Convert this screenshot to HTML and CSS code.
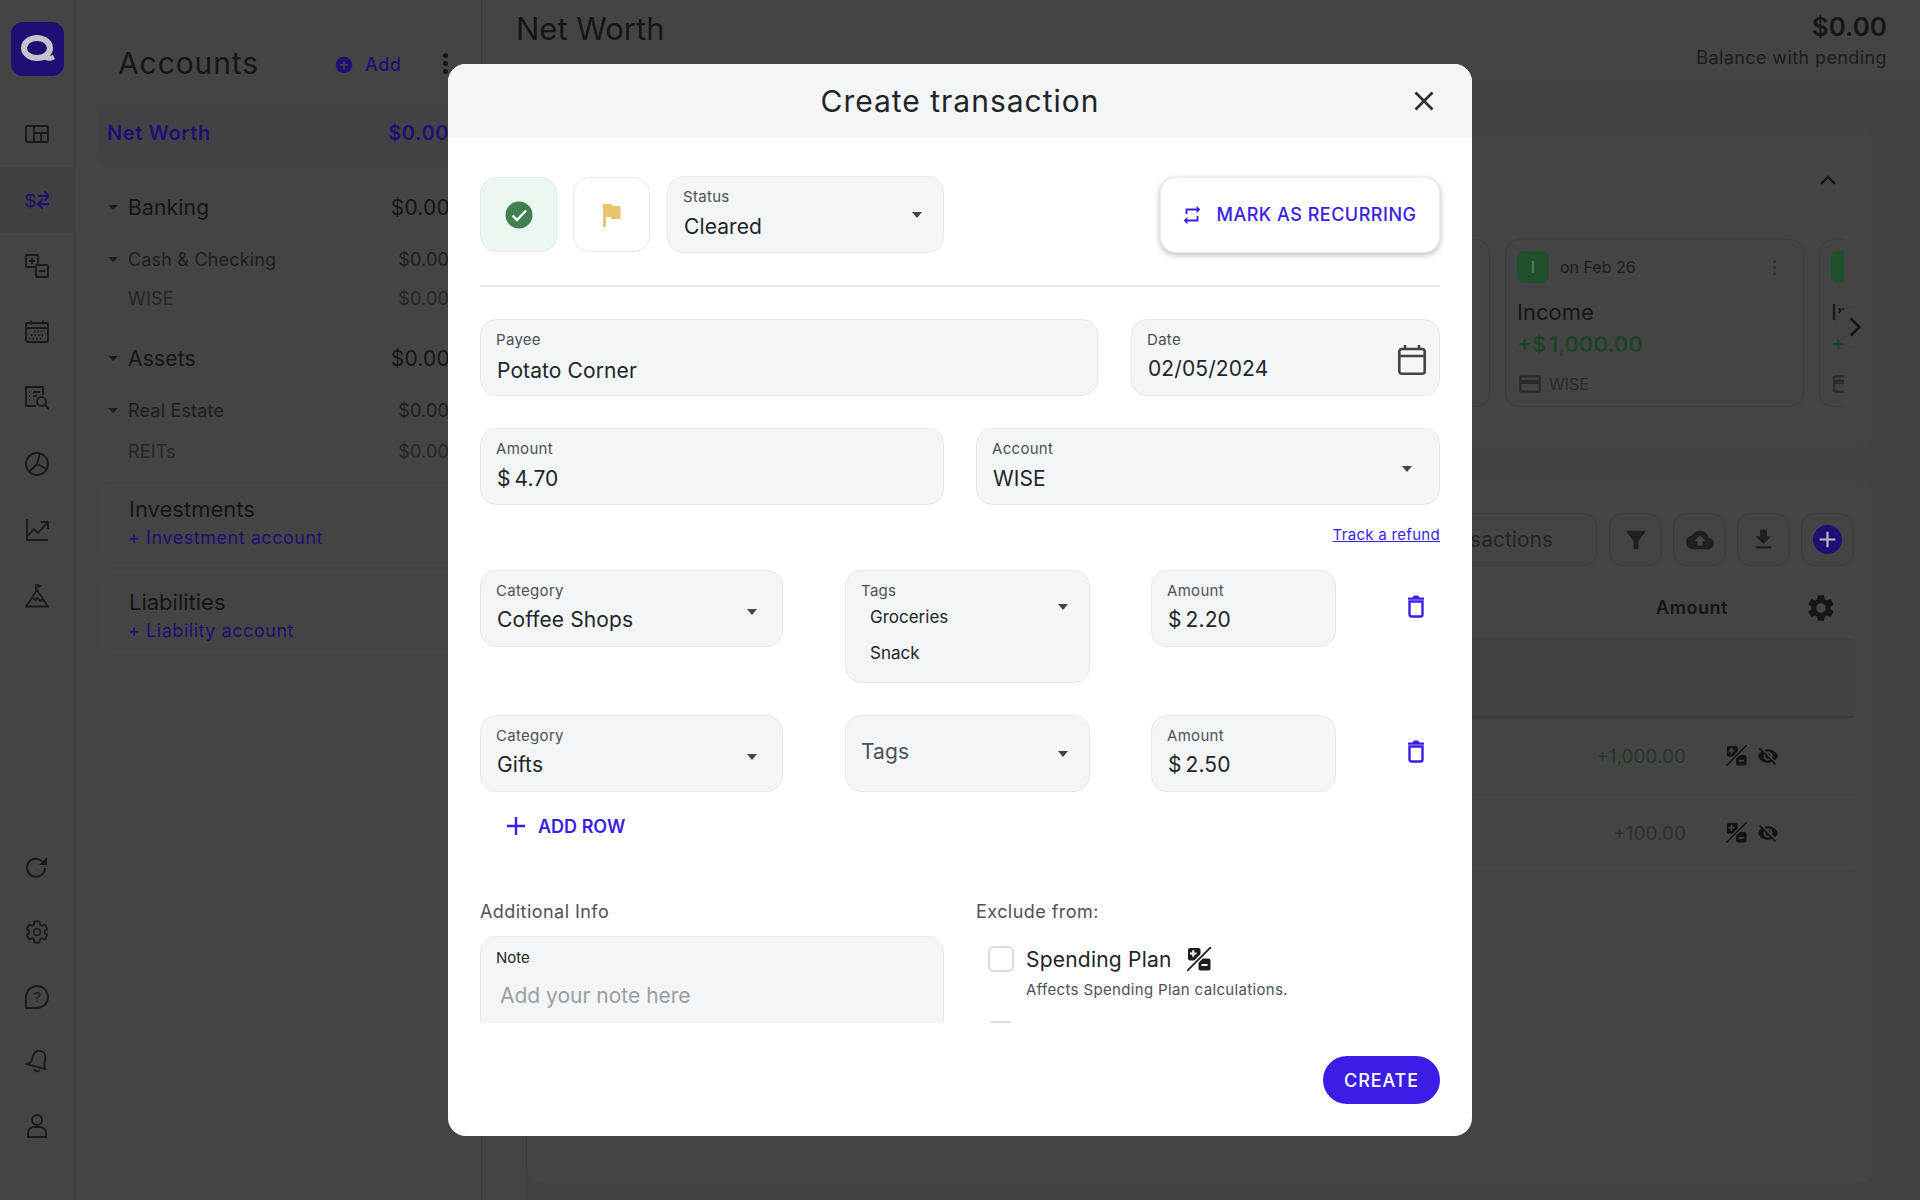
FILE: index.html
```html
<!DOCTYPE html>
<html lang="en">
<head>
  <meta charset="UTF-8" />
  <title>Create transaction</title>
  <link rel="stylesheet" href="styles.css">
</head>
<body>

  <!-- Shared icons -->
  <svg class="sprite" width="0" height="0">
    <symbol id="i-percent-off" viewBox="0 0 24 24">
      <rect x="1" y="1" width="12.500" height="12.500" rx="2" fill="currentColor"/>
      <rect x="11.500" y="11.500" width="12" height="12" rx="2" fill="currentColor"/>
      <path fill="none" stroke="var(--slash, #fff)" stroke-width="4.600" d="M25 -1-1 25"/>
      <path fill="none" stroke="currentColor" stroke-width="1.800" d="M24 0 0 24"/>
      <path fill="none" stroke="var(--slash, #fff)" stroke-width="2" d="M3 6.500h6.500M6.250 3.200v6.600M14.500 18h6"/>
    </symbol>
    <symbol id="i-eye-off" viewBox="0 0 24 24">
      <path fill="currentColor" d="M12 7c2.760 0 5 2.240 5 5 0 .65-.13 1.260-.36 1.830l2.920 2.920c1.510-1.260 2.700-2.890 3.430-4.750-1.730-4.390-6-7.500-11-7.500-1.400 0-2.740.25-3.980.7l2.160 2.160C10.740 7.130 11.350 7 12 7zM2 4.270l2.280 2.280.46.46C3.080 8.300 1.780 10.020 1 12c1.730 4.390 6 7.500 11 7.500 1.550 0 3.030-.3 4.380-.84l.42.42L19.730 22 21 20.730 3.270 3 2 4.270zM7.530 9.800l1.550 1.550c-.05.21-.08.43-.08.65 0 1.660 1.340 3 3 3 .22 0 .44-.03.65-.08l1.550 1.550c-.67.33-1.410.53-2.200.53-2.760 0-5-2.240-5-5 0-.79.2-1.530.53-2.200zm4.310-.78l3.150 3.150.02-.16c0-1.660-1.340-3-3-3l-.17.01z"/>
    </symbol>
    <symbol id="i-trash" viewBox="0 0 18 23">
      <path fill="none" stroke="currentColor" stroke-width="2.400" d="M2.500 6.500h13v13a2 2 0 0 1-2 2h-9a2 2 0 0 1-2-2z"/>
      <path fill="currentColor" d="M1 2.500h4.500L7 .5h4l1.500 2H17v2.200H1z"/>
    </symbol>
    <symbol id="i-card" viewBox="0 0 24 24">
      <path fill="currentColor" d="M20 4H4c-1.110 0-1.990.890-1.990 2L2 18c0 1.110.890 2 2 2h16c1.110 0 2-.890 2-2V6c0-1.110-.890-2-2-2zm0 14H4v-6h16v6zm0-10H4V6h16v2z"/>
    </symbol>
  </svg>

  <div class="page">

    <!-- Icon rail -->
    <nav class="rail">
      <div class="logo">
        <svg viewBox="0 0 53 53" width="53" height="53">
          <ellipse cx="26" cy="26" rx="13" ry="10" fill="none" stroke="#c4c4cc" stroke-width="6"/>
          <path d="M29 35c5 4 10 5 15 2l-2-4c-3 1-5 1-8-1z" fill="#c4c4cc"/>
        </svg>
      </div>
      <a class="rail-item">
        <svg viewBox="0 0 24 24"><g fill="none" stroke="currentColor" stroke-width="1.800"><rect x="1" y="4" width="22" height="16" rx="1.500"/><path d="M9 4v16M9 11h14M16 11v9"/></g></svg>
      </a>
      <a class="rail-item active">
        <svg viewBox="0 0 24 24"><text x="0" y="19" class="rail-dollar">$</text><path fill="none" stroke="currentColor" stroke-width="1.800" d="M13 8h11M19.500 3.500 24 8l-4.500 4.500M24 16H13M17.500 11.500 13 16l4.500 4.500"/></svg>
      </a>
      <a class="rail-item">
        <svg viewBox="0 0 24 24"><g fill="none" stroke="currentColor" stroke-width="1.800"><rect x="1" y="1" width="12" height="12" rx="1"/><rect x="11" y="11" width="12" height="12" rx="1" fill="#444"/><path d="M4 7h6M7 4v6M14 17h6"/></g></svg>
      </a>
      <a class="rail-item">
        <svg viewBox="0 0 24 24"><g fill="none" stroke="currentColor" stroke-width="1.800"><rect x="1" y="3" width="22" height="19" rx="1.500"/><path d="M1 8h22M6 .5v4M18 .5v4"/><path stroke-dasharray="1.500 2" d="M9 11.500h11M6 15h14M4 18.500h13"/></g></svg>
      </a>
      <a class="rail-item">
        <svg viewBox="0 0 24 24"><g fill="none" stroke="currentColor" stroke-width="1.800"><path d="M11 20H1V1h17v8"/><path d="M4 6h1M8 6h7M4 10h1M8 10h4M4 14h1"/><circle cx="16.500" cy="15.500" r="4.500"/><path d="m20 19 4 4"/></g></svg>
      </a>
      <a class="rail-item">
        <svg viewBox="0 0 24 24"><g fill="none" stroke="currentColor" stroke-width="1.800"><circle cx="12" cy="12" r="11"/><path d="M12 12 15 1.500M12 12l10 5M12 12 4 20"/></g></svg>
      </a>
      <a class="rail-item">
        <svg viewBox="0 0 24 24"><path fill="none" stroke="currentColor" stroke-width="1.800" d="M2 1v21h21M2 19l7-8 4 4 9-10M16 4h7v7"/></svg>
      </a>
      <a class="rail-item">
        <svg viewBox="0 0 24 24"><g fill="none" stroke="currentColor" stroke-width="1.800"><path d="M1 22.500h22L12 6z"/><path d="m7.500 14 3 2 2-2 3 3 1.500-1.500M11 7V0l4 2-4 2"/></g></svg>
      </a>

      <div class="rail-spacer"></div>

      <a class="rail-item small">
        <svg viewBox="0 0 24 24"><path fill="none" stroke="currentColor" stroke-width="2" d="M20 12a9 9 0 1 1-3-7"/><path fill="currentColor" d="M22 1v8h-8z"/></svg>
      </a>
      <a class="rail-item small">
        <svg viewBox="0 0 24 24"><g fill="none" stroke="currentColor" stroke-width="1.600"><path d="M19.140 12.940c.04-.3.06-.61.06-.94 0-.32-.02-.64-.07-.94l2.030-1.580c.18-.14.23-.41.120-.61l-1.920-3.320c-.12-.22-.37-.29-.59-.22l-2.390.96c-.5-.38-1.030-.7-1.620-.94l-.36-2.540c-.04-.24-.24-.41-.48-.41h-3.840c-.24 0-.43.17-.47.41l-.36 2.540c-.59.24-1.130.57-1.620.94l-2.390-.96c-.22-.08-.47 0-.59.22L2.740 8.870c-.12.21-.08.47.12.61l2.030 1.580c-.05.3-.09.63-.09.94s.02.64.07.94l-2.030 1.580c-.18.14-.23.41-.12.61l1.920 3.320c.12.22.37.29.59.22l2.390-.96c.5.38 1.030.7 1.620.94l.36 2.540c.05.24.24.41.48.41h3.840c.24 0 .44-.17.47-.41l.36-2.540c.59-.24 1.130-.56 1.620-.94l2.390.96c.22.08.47 0 .59-.22l1.920-3.320c.12-.22.07-.47-.12-.61z" transform="translate(-1.200 -1.200) scale(1.100)"/><circle cx="12" cy="12" r="3.400"/></g></svg>
      </a>
      <a class="rail-item small">
        <svg viewBox="0 0 24 24"><path fill="none" stroke="currentColor" stroke-width="1.800" d="M1 23V12a11 11 0 1 1 11 11z"/><text x="12" y="17" class="rail-help">?</text></svg>
      </a>
      <a class="rail-item small">
        <svg viewBox="0 0 24 24"><g fill="none" stroke="currentColor" stroke-width="1.800"><path d="M2 15c4-1 5-3 6-8 1-4 5-6 8-5 4 1 5 5 4 9-1 4-1 6 0 9z"/><path d="M9 20a3.500 3.500 0 0 0 6 1"/></g></svg>
      </a>
      <a class="rail-item small">
        <svg viewBox="0 0 24 24"><g fill="none" stroke="currentColor" stroke-width="1.800"><circle cx="12" cy="6" r="5"/><path d="M3 23v-4a6 6 0 0 1 6-6h6a6 6 0 0 1 6 6v4z"/></g></svg>
      </a>
    </nav>

    <!-- Accounts list -->
    <aside class="accounts">
      <div class="accounts-head">
        <h2>Accounts</h2>
        <span class="add-link">
          <svg viewBox="0 0 24 24" width="18" height="18"><circle cx="12" cy="12" r="11" fill="currentColor"/><path d="M12 6.500v11M6.500 12h11" stroke="#444" stroke-width="2"/></svg>
          Add
        </span>
        <span class="kebab"><i></i><i></i><i></i></span>
      </div>

      <div class="net-row"><span>Net Worth</span><span>$0.00</span></div>

      <div class="acc-row group"><span class="caret-sm"></span><span class="acc-name">Banking</span><span class="acc-amt">$0.00</span></div>
      <div class="acc-row sub"><span class="caret-sm"></span><span class="acc-name">Cash &amp; Checking</span><span class="acc-amt">$0.00</span></div>
      <div class="acc-row leaf"><span class="acc-name">WISE</span><span class="acc-amt">$0.00</span></div>
      <div class="acc-row group assets"><span class="caret-sm"></span><span class="acc-name">Assets</span><span class="acc-amt">$0.00</span></div>
      <div class="acc-row sub"><span class="caret-sm"></span><span class="acc-name">Real Estate</span><span class="acc-amt">$0.00</span></div>
      <div class="acc-row leaf reits"><span class="acc-name">REITs</span><span class="acc-amt">$0.00</span></div>

      <div class="acc-box">
        <div class="acc-box-title">Investments</div>
        <div class="acc-box-link">+ Investment account</div>
      </div>
      <div class="acc-box">
        <div class="acc-box-title">Liabilities</div>
        <div class="acc-box-link">+ Liability account</div>
      </div>
    </aside>

    <!-- Main area, mostly behind the dialog -->
    <main class="main">
      <header class="main-head">
        <h1>Net Worth</h1>
        <div class="balance">
          <div class="balance-amt">$0.00</div>
          <div class="balance-sub">Balance with pending</div>
        </div>
      </header>

      <div class="main-body">
        <section class="panel upcoming">
          <div class="panel-top">
            <svg viewBox="0 0 24 24" width="24" height="24"><path fill="none" stroke="currentColor" stroke-width="2.400" d="m5 16 7-7 7 7"/></svg>
          </div>
          <div class="cards">
            <div class="card"></div>
            <div class="card">
              <div class="card-head">
                <span class="card-badge">I</span>
                <span class="card-date">on Feb 26</span>
                <span class="kebab faint"><i></i><i></i><i></i></span>
              </div>
              <div class="card-title">Income</div>
              <div class="card-amt">+$ 1,000.00</div>
              <div class="card-acc"><svg width="26" height="26"><use href="#i-card"/></svg>WISE</div>
            </div>
            <div class="card">
              <div class="card-head"><span class="card-badge"></span></div>
              <div class="card-title">Income</div>
              <div class="card-amt">+$ 1,000.00</div>
              <div class="card-acc"><svg width="26" height="26"><use href="#i-card"/></svg>WISE</div>
            </div>
          </div>
          <span class="next-btn">
            <svg viewBox="0 0 24 24" width="26" height="26"><path fill="none" stroke="currentColor" stroke-width="2.400" d="m8 4 8 8-8 8"/></svg>
          </span>
        </section>

        <section class="panel transactions">
          <div class="toolbar">
            <div class="search">Search transactions</div>
            <span class="tool"><svg viewBox="0 0 24 24" width="28" height="28"><path fill="currentColor" d="M4.250 5.610C6.270 8.200 10 13 10 13v6c0 .55.45 1 1 1h2c.55 0 1-.45 1-1v-6s3.720-4.800 5.740-7.390c.51-.66.04-1.610-.79-1.610H5.040c-.83 0-1.300.95-.79 1.610z"/></svg></span>
            <span class="tool"><svg viewBox="0 0 24 24" width="28" height="28"><path fill="currentColor" d="M19.350 10.040C18.670 6.590 15.640 4 12 4 9.110 4 6.600 5.640 5.350 8.040 2.340 8.360 0 10.910 0 14c0 3.310 2.690 6 6 6h13c2.760 0 5-2.240 5-5 0-2.640-2.050-4.780-4.650-4.960zM14 13v4h-4v-4H7l5-5 5 5h-3z"/></svg></span>
            <span class="tool"><svg viewBox="0 0 24 24" width="27" height="27"><path fill="currentColor" d="M19 9h-4V3H9v6H5l7 7 7-7zM5 18v2h14v-2H5z"/></svg></span>
            <span class="tool"><svg viewBox="0 0 24 24" width="29" height="29"><circle cx="12" cy="12" r="12" fill="#1f0f75"/><path d="M12 5.500v13M5.500 12h13" stroke="#bdbdbd" stroke-width="1.800"/></svg></span>
          </div>
          <div class="tx-head">
            <span>Amount</span>
            <svg viewBox="0 0 24 24" width="32" height="32"><path fill="currentColor" d="M19.140 12.940c.04-.3.06-.61.06-.94 0-.32-.02-.64-.07-.94l2.030-1.580c.18-.14.23-.41.120-.61l-1.920-3.320c-.12-.22-.37-.29-.59-.22l-2.390.96c-.5-.38-1.030-.7-1.620-.94l-.36-2.540c-.04-.24-.24-.41-.48-.41h-3.840c-.24 0-.43.17-.47.41l-.36 2.540c-.59.24-1.130.57-1.620.94l-2.390-.96c-.22-.08-.47 0-.59.22L2.740 8.870c-.12.21-.08.47.12.61l2.030 1.580c-.05.3-.09.63-.09.94s.02.64.07.94l-2.030 1.580c-.18.14-.23.41-.12.61l1.920 3.320c.12.22.37.29.59.22l2.390-.96c.5.38 1.030.7 1.620.94l.36 2.540c.05.24.24.41.48.41h3.840c.24 0 .44-.17.47-.41l.36-2.540c.59-.24 1.130-.56 1.620-.94l2.390.96c.22.08.47 0 .59-.22l1.920-3.320c.12-.22.07-.47-.12-.61l-2.010-1.580zM12 15.600c-1.980 0-3.600-1.620-3.600-3.600s1.620-3.600 3.600-3.600 3.600 1.620 3.600 3.600-1.620 3.600-3.600 3.600z"/></svg>
          </div>
          <div class="tx-group"></div>
          <div class="tx-row">
            <span>+1,000.00</span>
            <span class="tx-flags"><svg width="21" height="21" class="dim-slash"><use href="#i-percent-off"/></svg><svg width="22" height="22"><use href="#i-eye-off"/></svg></span>
          </div>
          <div class="tx-row">
            <span>+100.00</span>
            <span class="tx-flags"><svg width="21" height="21" class="dim-slash"><use href="#i-percent-off"/></svg><svg width="22" height="22"><use href="#i-eye-off"/></svg></span>
          </div>
        </section>
      </div>
    </main>
  </div>

  <!-- Dialog -->
  <div class="overlay">
    <div class="modal">
      <div class="modal-head">
        <h3>Create transaction</h3>
        <span class="modal-close">
          <svg viewBox="0 0 24 24" width="24" height="24"><path fill="none" stroke="#2b2f33" stroke-width="2.600" d="m3.500 3.500 17 17M20.500 3.500l-17 17"/></svg>
        </span>
      </div>

      <div class="modal-body">
        <div class="status-row">
          <span class="square-btn cleared">
            <svg viewBox="0 0 28 28" width="28" height="28"><circle cx="14" cy="14" r="13.500" fill="#3f7f50"/><path d="m7.500 14.500 4.500 4.500 9-9.500" fill="none" stroke="#fff" stroke-width="2.400"/></svg>
          </span>
          <span class="square-btn flag">
            <svg viewBox="0 0 18 24" width="18" height="24"><path d="M0 1h9v2h8.500v13H8v-2H3v10H0z" fill="#e7c46f"/></svg>
          </span>
          <div class="field select status">
            <div class="field-text">
              <div class="field-label">Status</div>
              <div class="field-value">Cleared</div>
            </div>
            <span class="caret"></span>
          </div>
          <span class="recurring">
            <svg viewBox="0 0 24 24" width="22" height="22"><path fill="currentColor" d="M7 7h10v3l4-4-4-4v3H5v6h2V7zm10 10H7v-3l-4 4 4 4v-3h12v-6h-2v4z"/></svg>
            MARK AS RECURRING
          </span>
        </div>

        <div class="divider"></div>

        <div class="form-row payee-row">
          <div class="field">
            <div class="field-text">
              <div class="field-label">Payee</div>
              <div class="field-value">Potato Corner</div>
            </div>
          </div>
          <div class="field date">
            <div class="field-text">
              <div class="field-label">Date</div>
              <div class="field-value">02/05/2024</div>
            </div>
            <svg class="date-icon" viewBox="0 0 28 30" width="28" height="30"><g fill="none" stroke="#3f4448" stroke-width="2.600"><rect x="1.300" y="4" width="25.400" height="24.700" rx="2.500"/><path d="M1 11h26M7 0v5M21 0v5"/></g></svg>
          </div>
        </div>

        <div class="form-row amount-row">
          <div class="field">
            <div class="field-text">
              <div class="field-label">Amount</div>
              <div class="field-value money">$ 4.70</div>
            </div>
          </div>
          <div class="field select">
            <div class="field-text">
              <div class="field-label">Account</div>
              <div class="field-value">WISE</div>
            </div>
            <span class="caret account-caret"></span>
          </div>
        </div>

        <div class="refund-row"><a class="refund">Track a refund</a></div>

        <div class="split-row">
          <div class="field select split-cat">
            <div class="field-text">
              <div class="field-label">Category</div>
              <div class="field-value">Coffee Shops</div>
            </div>
            <span class="caret cat-caret"></span>
          </div>
          <div class="field select split-tags tall">
            <div class="field-text">
              <div class="field-label">Tags</div>
              <div class="tag">Groceries</div>
              <div class="tag">Snack</div>
            </div>
            <span class="caret high"></span>
          </div>
          <div class="field split-amt">
            <div class="field-text">
              <div class="field-label">Amount</div>
              <div class="field-value money">$ 2.20</div>
            </div>
          </div>
          <svg class="trash" width="18" height="23"><use href="#i-trash"/></svg>
        </div>

        <div class="split-row second">
          <div class="field select split-cat">
            <div class="field-text">
              <div class="field-label">Category</div>
              <div class="field-value">Gifts</div>
            </div>
            <span class="caret cat-caret"></span>
          </div>
          <div class="field select split-tags">
            <div class="field-text centered"><div class="tags-empty">Tags</div></div>
            <span class="caret"></span>
          </div>
          <div class="field split-amt">
            <div class="field-text">
              <div class="field-label">Amount</div>
              <div class="field-value money">$ 2.50</div>
            </div>
          </div>
          <svg class="trash" width="18" height="23"><use href="#i-trash"/></svg>
        </div>

        <div class="add-row">
          <svg viewBox="0 0 20 20" width="20" height="20"><path d="M10 1v18M1 10h18" stroke="currentColor" stroke-width="2.400"/></svg>
          ADD ROW
        </div>

        <div class="info-grid">
          <div>
            <div class="info-title">Additional Info</div>
            <div class="field note">
              <div class="field-text">
                <div class="note-label">Note</div>
                <div class="note-placeholder">Add your note here</div>
              </div>
            </div>
          </div>
          <div>
            <div class="info-title">Exclude from:</div>
            <div class="exclude">
              <span class="checkbox"></span>
              <div>
                <div class="exclude-name">Spending Plan <svg width="24" height="24"><use href="#i-percent-off"/></svg></div>
                <div class="exclude-help">Affects Spending Plan calculations.</div>
              </div>
            </div>
            <div class="exclude"><span class="checkbox"></span></div>
          </div>
        </div>
      </div>

      <div class="modal-foot">
        <span class="create-btn">CREATE</span>
      </div>
    </div>
  </div>

</body>
</html>
```

FILE: styles.css
```css
:root {
  --scrim: #444444;
  --scrim-line: #3d3d3d;
  --ink: #161616;
  --ink-soft: #1e1e1e;
  --navy: #1f0f75;
  --blue: #3a1ee6;
  --field: #f3f5f7;
  --field-line: #e6e8ea;
}

* {
  box-sizing: border-box;
}

body {
  margin: 0;
  font-family: Inter, "Noto Sans", sans-serif;
  background: var(--scrim);
  color: var(--ink);
  height: 1200px;
  overflow: hidden;
}

h1, h2, h3 {
  margin: 0;
  font-weight: 400;
}

.sprite {
  position: absolute;
}

.page {
  display: flex;
  height: 1200px;
}

/* Rail */
.rail {
  width: 75px;
  flex: none;
  display: flex;
  flex-direction: column;
  border-right: 1px solid var(--scrim-line);
  padding-bottom: 42px;
}

.logo {
  width: 53px;
  height: 54px;
  margin: 22px 0 25px 11px;
  background: var(--navy);
  border-radius: 12px;
}

.logo svg {
  display: block;
}

.rail-item {
  height: 66px;
  display: flex;
  align-items: center;
  justify-content: center;
  color: #1a1a1a;
}

.rail-item svg {
  width: 24px;
  height: 24px;
}

.rail-item.small {
  height: 64.5px;
}

.rail-item.active {
  background: #404041;
  color: var(--navy);
}

.rail-dollar {
  font-size: 19px;
  fill: currentColor;
  font-family: "Liberation Sans", sans-serif;
}

.rail-help {
  font-size: 14px;
  fill: currentColor;
  text-anchor: middle;
  font-family: "Liberation Sans", sans-serif;
}

.rail-spacer {
  flex: 1;
}

/* Accounts */
.accounts {
  width: 407px;
  flex: none;
  padding: 0 0 0 22px;
  border-right: 1px solid var(--scrim-line);
}

.accounts-head {
  display: flex;
  align-items: center;
  height: 101px;
  padding: 25px 0 0 21px;
}

.accounts-head h2 {
  font-size: 30px;
  letter-spacing: 0.03em;
  width: 217px;
  color: var(--ink);
}

.add-link {
  display: flex;
  align-items: center;
  gap: 12px;
  padding-top: 3px;
  color: var(--navy);
  font-size: 18px;
  font-weight: 500;
  letter-spacing: 0.03em;
  width: 108px;
}

.kebab {
  display: flex;
  flex-direction: column;
  gap: 3px;
}

.kebab i {
  width: 5px;
  height: 5px;
  border-radius: 50%;
  background: var(--ink);
}

.kebab.faint i {
  width: 3px;
  height: 3px;
  background: #2e2e2e;
}

.net-row {
  height: 65px;
  margin-bottom: 19px;
  padding: 0 32px 2px 10px;
  display: flex;
  align-items: center;
  justify-content: space-between;
  background: #424245;
  border-radius: 14px;
  color: var(--navy);
  font-size: 20px;
  font-weight: 600;
  letter-spacing: 0.03em;
}

.acc-row {
  display: flex;
  align-items: center;
  padding: 0 32px 0 11px;
  color: var(--ink-soft);
}

.acc-name {
  flex: 1;
  padding-left: 20px;
}

.caret-sm {
  width: 0;
  height: 0;
  margin-right: -10px;
  border: 5px solid transparent;
  border-top: 5px solid #1c1c1c;
  border-bottom: 0;
}

.acc-row.group {
  height: 44px;
  padding-right: 31px;
  font-size: 21px;
  letter-spacing: 0.01em;
  color: var(--ink);
}

.acc-row.group.assets {
  margin-top: 19px;
}

.acc-row.sub {
  height: 38px;
  margin-top: 11px;
  font-size: 18px;
  letter-spacing: 0.01em;
}

.acc-row.leaf {
  height: 38px;
  margin-top: 1px;
  padding-left: 31px;
  font-size: 18px;
  letter-spacing: 0.01em;
  color: #262626;
}

.acc-row.leaf .acc-name {
  padding-left: 0;
}

.acc-row.reits {
  margin-top: 3px;
}

.acc-box {
  height: 81px;
  margin-top: 12px;
  padding: 11px 0 0 30px;
  border: 1px solid #414141;
  border-radius: 14px;
}

.acc-box-title {
  padding-left: 1px;
  font-size: 22px;
  line-height: 30px;
}

.acc-box-link {
  margin-top: 1px;
  font-size: 18px;
  line-height: 26px;
  letter-spacing: 0.03em;
  color: var(--navy);
}

/* Main */
.main {
  flex: 1;
  min-width: 0;
}

.main-head {
  height: 84px;
  padding: 6px 33px 0 34px;
  display: flex;
  justify-content: space-between;
}

.main-head h1 {
  font-size: 31px;
  line-height: 46px;
}

.balance {
  text-align: right;
  margin-top: -1px;
}

.balance-amt {
  font-size: 26px;
  font-weight: 600;
  line-height: 44px;
}

.balance-sub {
  font-size: 18px;
  line-height: 24px;
  letter-spacing: 0.022em;
  color: var(--ink-soft);
  margin-top: -3px;
}

.main-body {
  margin-left: 44px;
  height: 1116px;
  padding: 48px 44px 0 0;
  background: #424242;
  border-left: 1px solid var(--scrim-line);
}

.panel {
  position: relative;
  background: var(--scrim);
  border-radius: 16px;
  padding-right: 22px;
}

.upcoming {
  height: 313px;
  margin-bottom: 38px;
}

.panel-top {
  display: flex;
  justify-content: flex-end;
  height: 107px;
  padding: 36px 14px 0 0;
}

.cards {
  display: flex;
  gap: 15px;
  padding-left: 664px;
  margin-right: 10px;
  overflow: hidden;
}

.card {
  width: 299px;
  height: 168px;
  flex: none;
  padding: 11px 11px;
  border: 1px solid var(--scrim-line);
  border-radius: 14px;
}

.card-head {
  display: flex;
  align-items: center;
  height: 32px;
}

.card-badge {
  width: 32px;
  height: 32px;
  display: flex;
  align-items: center;
  justify-content: center;
  background: #1f4f2c;
  border-radius: 7px;
  color: #5d8a69;
  font-size: 16px;
}

.card-date {
  flex: 1;
  margin-left: 11px;
  font-size: 16px;
  color: var(--ink-soft);
}

.card .kebab {
  margin-right: 16px;
}

.card-title {
  margin-top: 14px;
  font-size: 22px;
  line-height: 30px;
}

.card-amt {
  margin-top: 1px;
  font-size: 22px;
  font-weight: 600;
  line-height: 32px;
  word-spacing: -3px;
  color: #1c4327;
}

.card-acc {
  display: flex;
  align-items: center;
  gap: 6px;
  margin-top: 11px;
  font-size: 16px;
  color: #2a2a2a;
}

.next-btn {
  position: absolute;
  top: 174px;
  right: 0;
  width: 42px;
  height: 42px;
  display: flex;
  align-items: center;
  justify-content: center;
  background: var(--scrim);
  border: 1px solid #414141;
  border-radius: 50%;
}

.next-btn svg {
  color: var(--ink);
}

.transactions {
  height: 700px;
  padding-top: 30px;
}

.toolbar {
  display: flex;
  justify-content: flex-end;
  gap: 11px;
}

.search {
  width: 300px;
  height: 53px;
  margin-right: 1px;
  padding-right: 43px;
  display: flex;
  align-items: center;
  justify-content: flex-end;
  border: 1px solid var(--scrim-line);
  border-radius: 14px;
  font-size: 21px;
  color: #242424;
}

.tool {
  width: 53px;
  height: 53px;
  display: flex;
  align-items: center;
  justify-content: center;
  border: 1px solid var(--scrim-line);
  border-radius: 14px;
  color: #1f1f1f;
}

.tx-head {
  display: flex;
  align-items: center;
  justify-content: flex-end;
  gap: 77px;
  height: 74px;
  padding: 10px 17px 0 0;
  border-bottom: 1px solid var(--scrim-line);
  font-size: 18px;
  font-weight: 600;
  letter-spacing: 0.03em;
}

.tx-group {
  height: 78px;
  background: #424242;
  border-bottom: 2px solid #393939;
}

.tx-row {
  display: flex;
  align-items: center;
  justify-content: flex-end;
  gap: 40px;
  height: 77px;
  padding-right: 75px;
  border-bottom: 1px solid #414141;
  font-size: 19px;
  color: #26352a;
}

.tx-flags {
  display: flex;
  gap: 10px;
  color: #141414;
}

.dim-slash {
  --slash: var(--scrim);
}

/* Dialog */
.overlay {
  position: fixed;
  inset: 0;
  display: flex;
  align-items: center;
  justify-content: center;
}

.modal {
  width: 1024px;
  height: 1072px;
  display: flex;
  flex-direction: column;
  background: #fff;
  border-radius: 18px;
  overflow: hidden;
}

.modal-head {
  position: relative;
  flex: none;
  height: 74px;
  display: flex;
  align-items: center;
  justify-content: center;
  background: var(--field);
}

.modal-head h3 {
  font-size: 30px;
  letter-spacing: 0.033em;
  color: #212529;
}

.modal-close {
  position: absolute;
  right: 36px;
  top: 25px;
  height: 24px;
}

.modal-body {
  flex: 1;
  min-height: 0;
  overflow: hidden;
  padding: 38px 32px 0;
}

.modal-foot {
  flex: none;
  height: 113px;
  padding: 33px 32px 0;
  display: flex;
  justify-content: flex-end;
  align-items: flex-start;
}

.status-row {
  display: flex;
  align-items: center;
  height: 77px;
}

.square-btn {
  width: 77px;
  height: 75px;
  margin-right: 16px;
  display: flex;
  align-items: center;
  justify-content: center;
  background: #fff;
  border: 1px solid var(--field-line);
  border-radius: 16px;
}

.square-btn.cleared {
  background: #ecf7ef;
  border-color: #e2ece5;
}

.square-btn.flag {
  margin-right: 17px;
}

.field {
  height: 77px;
  padding: 10px 25px 0 15px;
  display: flex;
  background: var(--field);
  border: 1px solid var(--field-line);
  border-radius: 16px;
}

.field-text {
  flex: 1;
  min-width: 0;
}

.field-label {
  font-size: 15px;
  line-height: 20px;
  letter-spacing: 0.02em;
  color: #4d5156;
}

.field-value {
  margin-top: 5px;
  padding-left: 1px;
  font-size: 21px;
  line-height: 30px;
  letter-spacing: 0.005em;
  color: #212529;
}

.field-value.money {
  word-spacing: -2px;
}

.caret {
  flex: none;
  width: 0;
  height: 0;
  margin-top: 25px;
  border: 5px solid transparent;
  border-top: 6px solid #3f4448;
  border-bottom: 0;
}

.caret.high {
  margin-top: 23px;
}

.caret.cat-caret {
  margin-top: 28px;
}

.caret.account-caret {
  margin-top: 27px;
  margin-right: 2px;
}

.status {
  width: 277px;
  padding-right: 21px;
}

.recurring {
  margin-left: auto;
  width: 280px;
  height: 76px;
  padding-right: 3px;
  display: flex;
  align-items: center;
  justify-content: center;
  gap: 14px;
  background: #fff;
  border: 1px solid #eceef0;
  border-radius: 16px;
  box-shadow: 0 2px 6px rgba(0, 0, 0, 0.28);
  color: var(--blue);
  font-size: 18px;
  font-weight: 500;
  letter-spacing: 0.5px;
}

.divider {
  height: 2px;
  margin: 32px 0 32px;
  background: #e8e9eb;
}

.form-row {
  display: flex;
  gap: 33px;
}

.payee-row .field-value {
  margin-top: 6px;
}

.payee-row .field:first-child {
  width: 618px;
}

.date {
  flex: 1;
  padding-right: 13px;
}

.date .field-value {
  margin-top: 4px;
}

.date-icon {
  margin-top: 15px;
}

.amount-row {
  margin-top: 32px;
  gap: 32px;
}

.amount-row .field {
  width: 464px;
}

.refund-row {
  margin-top: 19px;
  text-align: right;
  line-height: 20px;
}

.refund {
  font-size: 15px;
  letter-spacing: 0.02em;
  color: var(--blue);
  text-decoration: underline;
}

.split-row {
  display: flex;
  align-items: flex-start;
  margin-top: 25px;
}

.split-row.second {
  margin-top: 32px;
}

.split-row .field-value {
  margin-top: 4px;
}

.split-cat {
  width: 303px;
}

.split-tags {
  width: 245px;
  margin-left: 62px;
  padding-right: 21px;
}

.split-tags.tall {
  height: 113px;
}

.split-amt {
  width: 185px;
  margin-left: 61px;
}

.trash {
  margin: 25px 0 0 71px;
  color: var(--blue);
}

.tag {
  padding-left: 9px;
  font-size: 17px;
  line-height: 36px;
  color: #212529;
}

.tag:nth-child(2) {
  margin-top: -2px;
}

.field-text.centered {
  display: flex;
  align-items: center;
  height: 50px;
}

.tags-empty {
  font-size: 21px;
  letter-spacing: 0.005em;
  color: #4d5156;
}

.add-row {
  display: flex;
  align-items: center;
  gap: 12px;
  height: 34px;
  margin-top: 17px;
  padding-left: 26px;
  color: var(--blue);
  font-size: 18px;
  font-weight: 600;
}

.info-grid {
  display: grid;
  grid-template-columns: 464px 1fr;
  gap: 32px;
  margin-top: 57px;
}

.info-title {
  font-size: 18px;
  line-height: 24px;
  letter-spacing: 0.025em;
  color: #4d5156;
}

.note {
  height: 160px;
  margin-top: 12px;
  padding-top: 11px;
}

.note-label {
  font-size: 15px;
  line-height: 20px;
  color: #212529;
}

.note-placeholder {
  margin-top: 13px;
  padding-left: 4px;
  font-size: 21px;
  line-height: 30px;
  color: #9a9ea3;
}

.exclude {
  display: flex;
  gap: 12px;
  height: 85px;
  margin-top: 12px;
  padding-left: 12px;
}

.exclude + .exclude {
  margin-top: 0;
}

.checkbox {
  flex: none;
  width: 26px;
  height: 26px;
  margin-top: 10px;
  border: 2px solid #d9dbde;
  border-radius: 6px;
}

.exclude + .exclude .checkbox {
  margin-top: 0;
}

.exclude-name {
  display: flex;
  align-items: center;
  gap: 15px;
  height: 26px;
  margin-top: 10px;
  font-size: 21px;
  letter-spacing: 0.01em;
  color: #212529;
}

.exclude-name svg {
  color: #1b1e21;
}

.exclude-help {
  margin-top: 8px;
  font-size: 15px;
  line-height: 20px;
  letter-spacing: 0.35px;
  color: #4d5156;
}

.create-btn {
  width: 117px;
  height: 48px;
  display: flex;
  align-items: center;
  justify-content: center;
  background: var(--blue);
  border-radius: 24px;
  color: #fff;
  font-size: 18px;
  font-weight: 500;
  letter-spacing: 0.9px;
}
```
